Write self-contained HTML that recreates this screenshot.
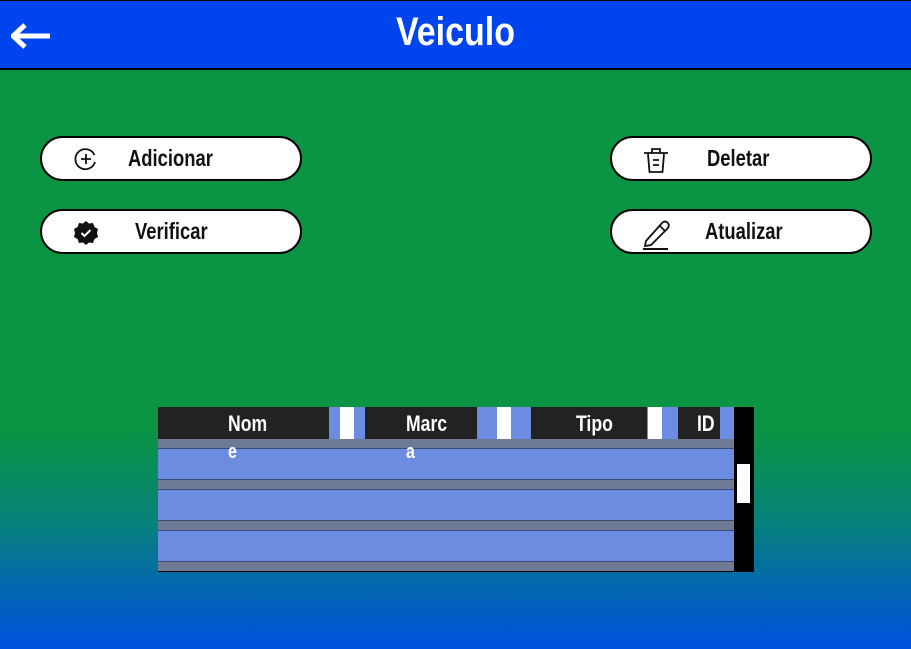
<!DOCTYPE html>
<html><head><meta charset="utf-8"><style>
*{margin:0;padding:0;box-sizing:border-box}
body{width:911px;height:649px;overflow:hidden;position:relative;font-family:"Liberation Sans",sans-serif;
background:linear-gradient(to bottom,#0a9444 0px,#0a9444 430px,#07827a 520px,#0050e0 649px)}
.hdr{position:absolute;left:0;top:0;width:911px;height:70px;background:#0044ee;border-top:1px solid #000;border-bottom:2px solid #000}
.title{position:absolute;left:0;width:911px;top:9px;text-align:center;color:#fff;font-weight:bold;font-size:40px;transform:scaleX(0.85)}
.btn{position:absolute;width:262px;height:45px;background:#fff;border:2px solid #000;border-radius:23px}
.btn span{position:absolute;top:7px;font-weight:bold;font-size:23px;color:#111;transform:scaleX(0.8);transform-origin:left center}
.btn svg{position:absolute}
.a{position:absolute}
.lbl{position:absolute;color:#fff;font-weight:bold;font-size:22px;top:411px;transform:scaleX(0.8);transform-origin:left center}
</style></head><body>
<div class="hdr">
<svg style="position:absolute;left:11px;top:21px" width="40" height="28" viewBox="0 0 40 28"><path d="M2 14H39M14 3L2 14L14 25" stroke="#fff" stroke-width="5" fill="none"/></svg>
<div class="title">Veiculo</div>
</div>

<div class="btn" style="left:40px;top:136px">
<svg style="left:32px;top:9px" width="24" height="24" viewBox="0 0 24 24"><path d="M20.5 8A10 10 0 1 0 21 15" stroke="#111" stroke-width="1.8" fill="none"/><path d="M12 7V17M7 12H17" stroke="#111" stroke-width="1.8"/></svg>
<span style="left:86px">Adicionar</span></div>

<div class="btn" style="left:40px;top:209px">
<svg style="left:30px;top:9px" width="28" height="26" viewBox="0 0 28 26"><path d="M14 1L17 3.5L21 3L22.5 7L26 9L25 13L26 17L22.5 19L21 23L17 22.5L14 25L11 22.5L7 23L5.5 19L2 17L3 13L2 9L5.5 7L7 3L11 3.5Z" fill="#111"/><path d="M9.5 13L12.5 16L18.5 10" stroke="#fff" stroke-width="2" fill="none"/></svg>
<span style="left:93px">Verificar</span></div>

<div class="btn" style="left:610px;top:136px">
<svg style="left:30px;top:7px" width="28" height="30" viewBox="0 0 28 30"><path d="M2 8H26M10 8V4H18V8M6 9L7.5 27H20.5L22 9M11 15H17M11 20H17" stroke="#111" stroke-width="1.8" fill="none"/></svg>
<span style="left:95px">Deletar</span></div>

<div class="btn" style="left:610px;top:209px">
<svg style="left:30px;top:7px" width="30" height="32" viewBox="0 0 30 32"><path d="M4 23L20 5Q23 2 26 5Q28 8 25 11L9 27L3 28Z M18 8L23 13" stroke="#111" stroke-width="1.8" fill="none"/><path d="M1 31H26" stroke="#111" stroke-width="2"/></svg>
<span style="left:93px">Atualizar</span></div>

<div class="a" style="left:158px;top:407px;width:596px;height:165px;background:#000"></div>
<div class="a" style="left:158px;top:407px;width:576px;height:32px;background:#6c8ce2"></div>
<div class="a" style="left:158px;top:407px;width:171px;height:32px;background:#222"></div>
<div class="a" style="left:340px;top:407px;width:14px;height:32px;background:#fff"></div>
<div class="a" style="left:365px;top:407px;width:112px;height:32px;background:#222"></div>
<div class="a" style="left:497px;top:407px;width:14px;height:32px;background:#fff"></div>
<div class="a" style="left:531px;top:407px;width:116px;height:32px;background:#222"></div>
<div class="a" style="left:648px;top:407px;width:14px;height:32px;background:#fff"></div>
<div class="a" style="left:678px;top:407px;width:42px;height:32px;background:#222"></div>
<div class="lbl" style="left:228px">Nom</div>
<div class="lbl" style="left:406px">Marc</div>
<div class="lbl" style="left:576px">Tipo</div>
<div class="lbl" style="left:697px">ID</div>

<div class="a" style="left:158px;top:439px;width:576px;height:10px;background:#6f7a94;border-bottom:1px solid #3a4a70"></div>
<div class="a" style="left:158px;top:449px;width:576px;height:31px;background:#6c8ce2;border-bottom:1px solid #3a4a70"></div>
<div class="a" style="left:158px;top:480px;width:576px;height:10px;background:#6f7a94;border-bottom:1px solid #3a4a70"></div>
<div class="a" style="left:158px;top:490px;width:576px;height:31px;background:#6c8ce2;border-bottom:1px solid #3a4a70"></div>
<div class="a" style="left:158px;top:521px;width:576px;height:10px;background:#6f7a94;border-bottom:1px solid #3a4a70"></div>
<div class="a" style="left:158px;top:531px;width:576px;height:31px;background:#6c8ce2;border-bottom:1px solid #3a4a70"></div>
<div class="a" style="left:158px;top:562px;width:576px;height:9px;background:#6f7a94"></div>
<div class="a" style="left:228px;top:441px;color:#fff;font-weight:bold;font-size:20px;transform:scaleX(0.8);transform-origin:left">e</div>
<div class="a" style="left:406px;top:441px;color:#fff;font-weight:bold;font-size:20px;transform:scaleX(0.8);transform-origin:left">a</div>
<div class="a" style="left:737px;top:464px;width:13px;height:39px;background:#fff"></div>
</body></html>
